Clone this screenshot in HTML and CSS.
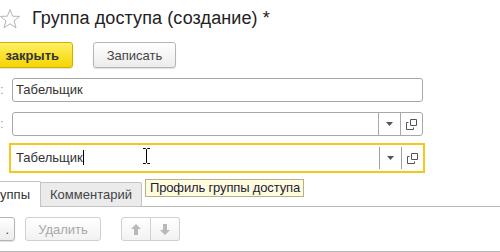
FILE: index.html
```html
<!DOCTYPE html>
<html lang="ru">
<head>
    <meta charset="UTF-8">
    <title>Группа доступа (создание)</title>
    <link rel="stylesheet" href="styles.css">
</head>
<body>
    <div class="header">
        <svg class="star" width="22" height="22" viewBox="0 0 22 22">
            <path d="M11 1.5 L13.6 8.2 L20.6 8.4 L15.1 12.8 L17 19.8 L11 15.8 L5 19.8 L6.9 12.8 L1.4 8.4 L8.4 8.2 Z" fill="none" stroke="#b4b4b4" stroke-width="1"/>
        </svg>
        <h1 class="title">Группа доступа (создание) *</h1>
    </div>

    <div class="toolbar">
        <button class="btn btn-main">закрыть</button>
        <button class="btn btn-save">Записать</button>
    </div>

    <div class="form">
        <div class="row">
            <span class="label">:</span>
            <div class="field">
                <span class="value">Табельщик</span>
            </div>
        </div>
        <div class="row">
            <span class="label">:</span>
            <div class="field">
                <span class="value"></span>
                <span class="field-btn">
                    <svg width="7" height="4" viewBox="0 0 7 4"><path d="M0 0 H7 L3.5 4 Z" fill="#555"/></svg>
                </span>
                <span class="field-btn">
                    <svg width="11" height="11" viewBox="0 0 11 11"><path d="M4.5 0.5 H10.5 V6.5 H4.5 Z M0.5 3.5 V10.5 H7.5 M0.5 3.5 H2.5 M7.5 10.5 V8.5" fill="none" stroke="#555" stroke-width="1"/></svg>
                </span>
            </div>
        </div>
        <div class="row row-focus">
            <div class="field field-focus">
                <span class="value">Табельщик<span class="caret"></span></span>
                <span class="field-btn">
                    <svg width="7" height="4" viewBox="0 0 7 4"><path d="M0 0 H7 L3.5 4 Z" fill="#555"/></svg>
                </span>
                <span class="field-btn">
                    <svg width="11" height="11" viewBox="0 0 11 11"><path d="M4.5 0.5 H10.5 V6.5 H4.5 Z M0.5 3.5 V10.5 H7.5 M0.5 3.5 H2.5 M7.5 10.5 V8.5" fill="none" stroke="#555" stroke-width="1"/></svg>
                </span>
            </div>
        </div>
    </div>

    <div class="tabs">
        <div class="tab tab-active">уппы</div>
        <div class="tab tab-other">Комментарий</div>
        <div class="tab-rest"></div>
    </div>

    <div class="toolbar toolbar-small">
        <button class="btn btn-small btn-cut">.</button>
        <button class="btn btn-small btn-disabled">Удалить</button>
        <div class="btn-group">
            <button class="btn btn-small btn-icon btn-up">
                <svg width="10" height="11" viewBox="0 0 10 11"><path d="M5 0 L10 5 H7 V11 H3 V5 H0 Z" fill="#b8b8b8"/></svg>
            </button>
            <button class="btn btn-small btn-icon btn-down">
                <svg width="10" height="11" viewBox="0 0 10 11"><path d="M5 11 L10 6 H7 V0 H3 V6 H0 Z" fill="#b8b8b8"/></svg>
            </button>
        </div>
    </div>

    <div class="bottom-line"></div>

    <svg class="ibeam" width="7" height="16" viewBox="0 0 7 16">
        <path d="M0 0.5 H2.5 L3.5 1.5 L4.5 0.5 H7 M3.5 1.5 V14.5 M0 15.5 H2.5 L3.5 14.5 L4.5 15.5 H7" fill="none" stroke="#000" stroke-width="1"/>
    </svg>
    <div class="tooltip">Профиль группы доступа</div>
</body>
</html>
```

FILE: styles.css
```css
html, body {
    margin: 0;
    padding: 0;
}
body {
    width: 500px;
    height: 252px;
    overflow: hidden;
    position: relative;
    background: #fff;
    font-family: "Liberation Sans", Arial, sans-serif;
    font-size: 13px;
    color: #333;
}
.header {
    display: flex;
    align-items: center;
    height: 36px;
}
.star {
    margin-left: -1px;
    margin-top: 1px;
}
.title {
    margin: 0 0 0 11px;
    font-size: 18px;
    font-weight: normal;
    color: #222;
    letter-spacing: 0.1px;
}
.toolbar {
    display: flex;
    align-items: center;
    margin-top: 6px;
    height: 26px;
}
.btn {
    font-family: inherit;
    font-size: 13px;
    color: #444;
    height: 26px;
    padding: 0;
    border: 1px solid #b5b5b5;
    border-radius: 3px;
    background: linear-gradient(#ffffff, #ececec);
    box-shadow: 0 1px 1px rgba(0, 0, 0, 0.12);
    cursor: default;
}
.btn-main {
    margin-left: -12px;
    width: 85px;
    text-align: right;
    padding-right: 13px;
    font-weight: bold;
    color: #333;
    border-color: #cfb000;
    background: linear-gradient(#fff066, #f6d500);
}
.btn-save {
    margin-left: 20px;
    width: 83px;
}
.form {
    margin-top: 10px;
}
.row {
    display: flex;
    align-items: center;
    height: 24px;
    margin-bottom: 10px;
}
.label {
    width: 12px;
    color: #7aa6c8;
    line-height: 24px;
}
.field {
    display: flex;
    align-items: stretch;
    width: 409px;
    height: 22px;
    border: 1px solid #a8a8a8;
    border-radius: 3px;
    background: #fff;
}
.value {
    flex: 1;
    padding-left: 3px;
    line-height: 22px;
    color: #333;
}
.field-btn {
    display: flex;
    align-items: center;
    justify-content: center;
    width: 21px;
    border-left: 1px solid #a8a8a8;
}
.row-focus {
    height: 30px;
    margin-top: -3px;
    margin-left: 9px;
}
.field-focus {
    width: 412px;
    height: 26px;
    border: 2px solid #f6c619;
    border-radius: 0;
}
.field-focus .value {
    line-height: 26px;
    padding-left: 5px;
}
.field-focus .field-btn {
    margin: 2px 0;
    border-left-color: #a0a0a0;
}
.caret {
    display: inline-block;
    width: 1px;
    height: 15px;
    background: #000;
    vertical-align: -3px;
}
.tabs {
    display: flex;
    align-items: flex-end;
    margin-top: -2px;
    height: 26px;
}
.tab {
    height: 25px;
    line-height: 25px;
    border: 1px solid #c4c4c4;
    border-bottom: none;
    border-radius: 0 2px 0 0;
    color: #444;
}
.tab-active {
    background: #fff;
    border-left: none;
    width: 41px;
    text-align: right;
    padding-right: 10px;
    box-sizing: border-box;
    height: 26px;
    color: #333;
}
.tab-other {
    border-left: none;
    border-bottom: 1px solid #c4c4c4;
    background: #ebebeb;
    width: 101px;
    box-sizing: border-box;
    text-align: center;
    height: 25px;
    line-height: 24px;
}
.tab-rest {
    flex: 1;
    border-bottom: 1px solid #b8b8b8;
}
.toolbar-small {
    margin-top: 10px;
    height: 24px;
}
.btn-small {
    height: 24px;
}
.btn-cut {
    margin-left: -60px;
    width: 75px;
    text-align: right;
    padding-right: 5px;
    color: #444;
}
.btn-disabled {
    margin-left: 10px;
    width: 76px;
    color: #a8a8a8;
    border-color: #d0d0d0;
    box-shadow: none;
    background: linear-gradient(#ffffff, #f2f2f2);
}
.btn-group {
    display: flex;
    margin-left: 20px;
}
.btn-icon {
    width: 30px;
    border-color: #d0d0d0;
    box-shadow: none;
    background: linear-gradient(#ffffff, #f2f2f2);
    display: flex;
    align-items: center;
    justify-content: center;
}
.btn-up {
    border-radius: 3px 0 0 3px;
}
.btn-down {
    border-left: none;
    border-radius: 0 3px 3px 0;
    width: 29px;
}
.bottom-line {
    margin-top: 10px;
    height: 1px;
    background: #b4b4b4;
}
.ibeam {
    position: absolute;
    left: 143px;
    top: 148px;
}
.tooltip {
    position: absolute;
    left: 145px;
    top: 179px;
    height: 16px;
    line-height: 16px;
    padding: 0 3px 0 4px;
    border: 1px solid #b8b08a;
    background: #fffbdd;
    color: #1c1c3a;
    font-size: 13px;
    letter-spacing: -0.15px;
    white-space: nowrap;
}
```
